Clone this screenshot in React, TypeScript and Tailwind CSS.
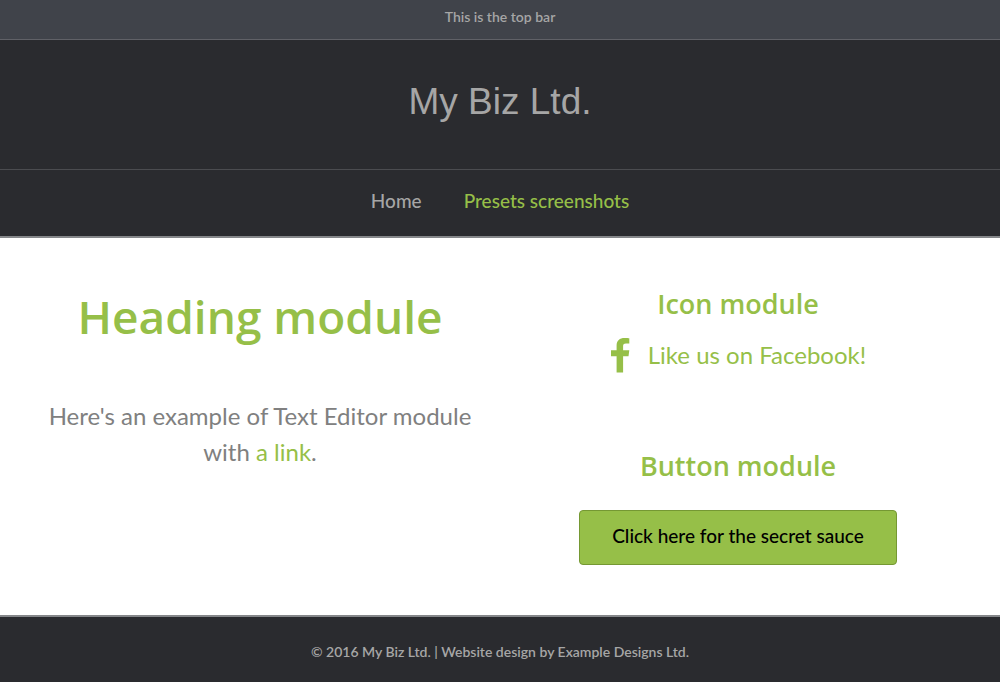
import React from "react";

const navItems = [
  { label: "Home", active: false },
  { label: "Presets screenshots", active: true },
];

function TopBar() {
  return (
    <div className="border-b border-[#606167] bg-[#40434a] pt-[5px] pb-[11px] text-center text-[14px] leading-[23px] font-semibold text-[#a6a6a6]">
      This is the top bar
    </div>
  );
}

function Header() {
  return (
    <header className="bg-[#2a2b2f]">
      <div className="border-b border-[#4b4c50] pt-[38px] pb-[43px] text-center">
        <a
          href="#"
          className="font-['Liberation_Sans',sans-serif] text-[37px] leading-[48px] text-[#a6a6a6]"
        >
          My Biz Ltd.
        </a>
      </div>
      <nav className="flex justify-center gap-[42px] border-b-2 border-[#85878a] pt-[14px] pb-[18px] text-[19px] leading-[34px] font-medium">
        {navItems.map((item) => (
          <a
            key={item.label}
            href="#"
            className={item.active ? "text-[#96bf48]" : "text-[#a6a6a6]"}
          >
            {item.label}
          </a>
        ))}
      </nav>
    </header>
  );
}

function FacebookIcon() {
  return (
    <svg
      viewBox="0 0 20 36"
      className="h-9 w-5"
      fill="currentColor"
      aria-hidden="true"
    >
      <path d="M19.3 1.2v5.4H16c-2.4 0-2.9 1-2.9 2.8v3.9h6.2l-.8 6h-5.4v16.2H6.6V19.3H1v-6h5.6V8.5C6.6 3.6 9.7 1 14.5 1c2.2 0 4.1.1 4.8.2z" />
    </svg>
  );
}

export default function App() {
  return (
    <div className="flex min-h-screen flex-col bg-white font-[Lato,sans-serif]">
      <TopBar />
      <Header />
      <main className="grid grid-cols-2 pr-[23px] pb-[50px] pl-[21px] text-center text-[#808080]">
        <section className="px-5 pt-[46px]">
          <h1 className="font-['Open_Sans',sans-serif] text-[46px] leading-[64px] font-semibold text-[#96bf48]">
            Heading module
          </h1>
          <p className="mt-[50px] text-[24px] leading-9">
            Here's an example of Text Editor module with{" "}
            <a href="#" className="text-[#96bf48]">
              a link
            </a>
            .
          </p>
        </section>
        <section className="px-5 pt-12 text-[#96bf48]">
          <h2 className="font-['Open_Sans',sans-serif] text-[27px] leading-9 font-semibold">
            Icon module
          </h2>
          <a
            href="#"
            className="mt-[15px] flex items-center justify-center gap-[18px] text-[24px] leading-9"
          >
            <FacebookIcon />
            Like us on Facebook!
          </a>
          <h2 className="mt-[75px] font-['Open_Sans',sans-serif] text-[27px] leading-9 font-semibold">
            Button module
          </h2>
          <button
            type="button"
            className="mt-[26px] rounded-[4px] border border-[#759833] bg-[#96bf48] px-8 pt-[10px] pb-[14px] text-[19px] leading-[29px] font-medium text-black"
          >
            Click here for the secret sauce
          </button>
        </section>
      </main>
      <footer className="grow border-t-2 border-[#85878a] bg-[#2a2b2f] pt-[23px] pb-[25px] text-center text-[14px] leading-6 font-semibold text-[#a6a6a6]">
        © 2016 My Biz Ltd. | Website design by Example Designs Ltd.
      </footer>
    </div>
  );
}
